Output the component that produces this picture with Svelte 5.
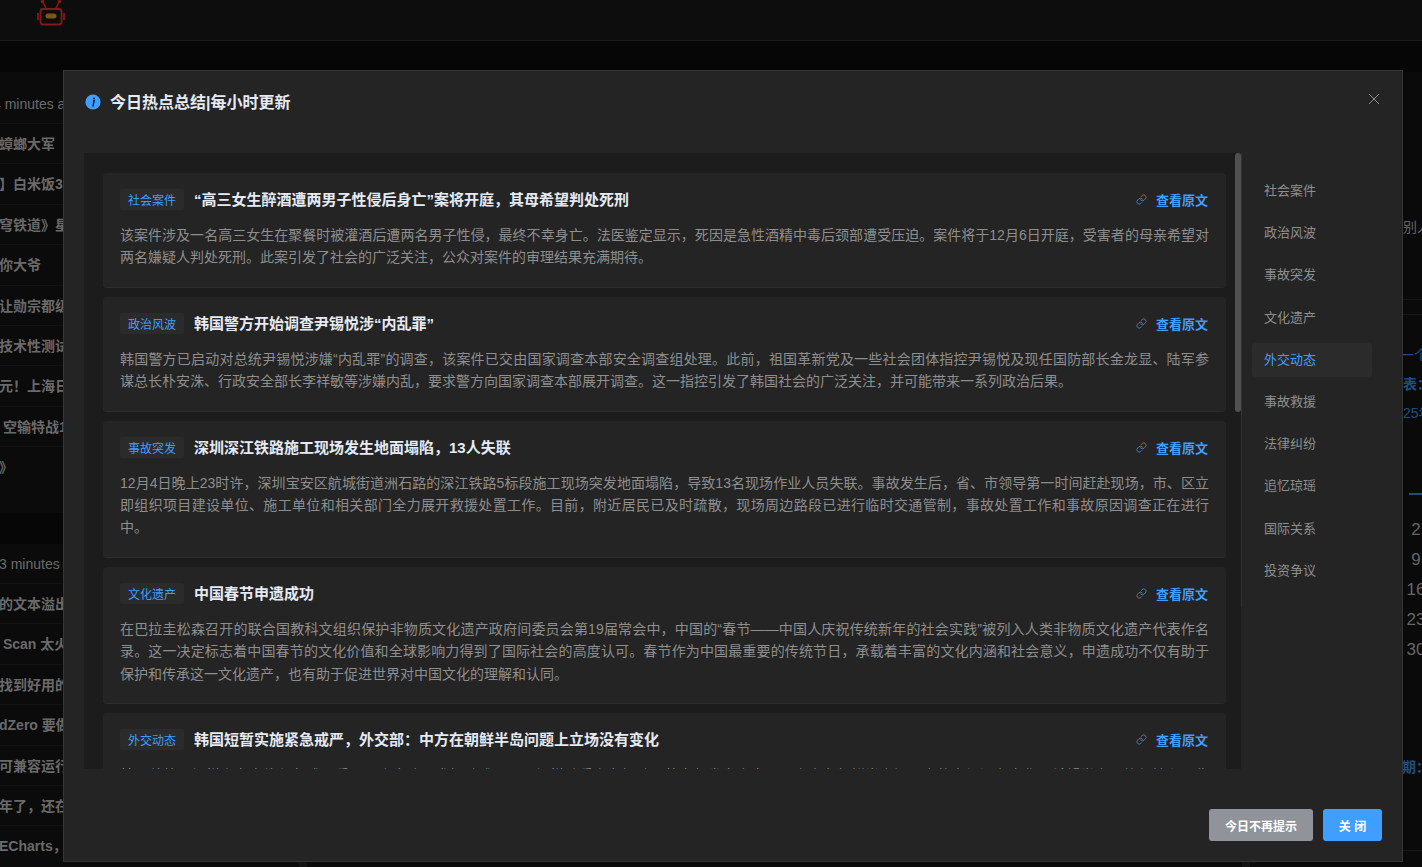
<script lang="ts">
  const leftTop = ['蟑螂大军', '】白米饭3', '穹铁道》星', '你大爷', '让勋宗都级', '技术性测试', '元！上海日', ' 空输特战1', '》'];
  const leftBottom = ['的文本溢出', ' Scan 太火', '找到好用的', 'dZero 要做', '可兼容运行', '年了，还在', 'ECharts，'];
  const dates = ['2', '9', '16', '23', '30'];

  const tabs = ['社会案件', '政治风波', '事故突发', '文化遗产', '外交动态', '事故救援', '法律纠纷', '追忆琼瑶', '国际关系', '投资争议'];
  const activeTab = '外交动态';

  // a \n marks a line break that has to land where the reference has it
  const news = [
    {
      tag: '社会案件',
      title: '“高三女生醉酒遭两男子性侵后身亡”案将开庭，其母希望判处死刑',
      body: '该案件涉及一名高三女生在聚餐时被灌酒后遭两名男子性侵，最终不幸身亡。法医鉴定显示，死因是急性酒精中毒后颈部遭受压迫。案件将于12月6日开庭，受害者的母亲希望对两名嫌疑人判处死刑。此案引发了社会的广泛关注，公众对案件的审理结果充满期待。'
    },
    {
      tag: '政治风波',
      title: '韩国警方开始调查尹锡悦涉“内乱罪”',
      body: '韩国警方已启动对总统尹锡悦涉嫌“内乱罪”的调查，该案件已交由国家调查本部安全调查组处理。此前，祖国革新党及一些社会团体指控尹锡悦及现任国防部长金龙显、陆军参\n谋总长朴安洙、行政安全部长李祥敏等涉嫌内乱，要求警方向国家调查本部展开调查。这一指控引发了韩国社会的广泛关注，并可能带来一系列政治后果。'
    },
    {
      tag: '事故突发',
      title: '深圳深江铁路施工现场发生地面塌陷，13人失联',
      body: '12月4日晚上23时许，深圳宝安区航城街道洲石路的深江铁路5标段施工现场突发地面塌陷，导致13名现场作业人员失联。事故发生后，省、市领导第一时间赶赴现场，市、区立即组织项目建设单位、施工单位和相关部门全力展开救援处置工作。目前，附近居民已及时疏散，现场周边路段已进行临时交通管制，事故处置工作和事故原因调查正在进行中。'
    },
    {
      tag: '文化遗产',
      title: '中国春节申遗成功',
      body: '在巴拉圭松森召开的联合国教科文组织保护非物质文化遗产政府间委员会第19届常会中，中国的“春节——中国人庆祝传统新年的社会实践”被列入人类非物质文化遗产代表作名录。这一决定标志着中国春节的文化价值和全球影响力得到了国际社会的高度认可。春节作为中国最重要的传统节日，承载着丰富的文化内涵和社会意义，申遗成功不仅有助于保护和传承这一文化遗产，也有助于促进世界对中国文化的理解和认同。'
    },
    {
      tag: '外交动态',
      title: '韩国短暂实施紧急戒严，外交部：中方在朝鲜半岛问题上立场没有变化',
      body: '韩国总统尹锡悦宣布实施紧急戒严后，国会表决要求解除戒严，尹锡悦随后宣布解除。外交部发言人表示，中方在朝鲜半岛问题上的立场没有变化，希望半岛局势保持和平稳定。'
    }
  ];
</script>

<div class="page">
  <header class="topbar">
    <svg class="robot" viewBox="0 0 28 26" width="28" height="26" aria-hidden="true">
      <path d="M9 8 6 2M19 8l3-6" fill="none" stroke="#861917" stroke-width="1.6" />
      <circle cx="5.5" cy="1.5" r="1.7" fill="#861917" />
      <circle cx="22.5" cy="1.5" r="1.7" fill="#861917" />
      <rect x="3.5" y="9" width="21" height="15.5" rx="2.5" fill="none" stroke="#861917" stroke-width="1.8" />
      <path d="M1 13v7M27 13v7" stroke="#861917" stroke-width="1.8" />
      <rect x="8.5" y="13.5" width="11" height="5" rx="2.5" fill="#7f5417" />
    </svg>
  </header>

  <div class="columns">
    <section class="col-left">
      <div class="panel panel-top">
        <div class="time time-first">4 minutes ago</div>
        {#each leftTop as row}
          <div class="row">{row}</div>
        {/each}
      </div>
      <div class="panel panel-bottom">
        <div class="time">3 minutes ago</div>
        {#each leftBottom as row}
          <div class="row">{row}</div>
        {/each}
      </div>
    </section>
    <div class="gutter"></div>
    <div class="col-mid"></div>
    <div class="gutter"></div>
    <section class="col-right">
      <div class="r-first">别人</div>
      <div class="r-rule"></div>
      <div class="r-link r-one">一个</div>
      <div class="r-label">表：</div>
      <div class="r-link">25年</div>
      <div class="r-line"></div>
      <div class="r-dates">
        {#each dates as d}
          <div>{d}</div>
        {/each}
      </div>
      <div class="r-label r-period">期：</div>
      <div class="r-foot"></div>
    </section>
  </div>
</div>

<div class="modal">
  <div class="modal-head">
    <svg class="info" viewBox="0 0 16 16" width="16" height="16" aria-hidden="true">
      <circle cx="8" cy="8" r="7.6" fill="#409eff" />
      <circle cx="9" cy="4.6" r="1.1" fill="#14253a" />
      <path d="M8 6.8h1.2l-1.2 5h1" fill="none" stroke="#14253a" stroke-width="1.5" />
    </svg>
    <span class="modal-title">今日热点总结|每小时更新</span>
    <svg class="close" viewBox="0 0 12 12" width="12" height="12" aria-hidden="true">
      <path d="M1 1l10 10M11 1 1 11" stroke="#8c8c8c" stroke-width="1" fill="none" />
    </svg>
  </div>

  <div class="modal-body">
    <div class="list">
      {#each news as item}
        <article class="card">
          <div class="card-head">
            <span class="tag">{item.tag}</span>
            <span class="card-title">{item.title}</span>
            <span class="source">
              <svg viewBox="0 0 24 24" width="11" height="11" aria-hidden="true">
                <path fill="none" stroke="#3a86d8" stroke-width="2" stroke-linecap="round" d="M10 13a5 5 0 0 0 7.54.54l3-3a5 5 0 0 0-7.07-7.07l-1.72 1.71M14 11a5 5 0 0 0-7.54-.54l-3 3a5 5 0 0 0 7.07 7.07l1.71-1.71" />
              </svg>
              <span>查看原文</span>
            </span>
          </div>
          <div class="card-body">
            {#each item.body.split('\n') as line}
              <p>{line}</p>
            {/each}
          </div>
        </article>
      {/each}
    </div>
    <div class="track"><div class="thumb"></div></div>
    <nav class="tabs">
      {#each tabs as tab}
        <div class="tab" class:active={tab === activeTab}>{tab}</div>
      {/each}
    </nav>
  </div>

  <div class="modal-foot">
    <button class="btn btn-muted">今日不再提示</button>
    <button class="btn btn-primary">关 闭</button>
  </div>
</div>

<style>
  :global(body) {
    background: #060606;
    font-family: 'Liberation Sans', 'Noto Sans CJK SC', sans-serif;
    overflow: hidden;
  }

  .page {
    height: 867px;
    display: flex;
    flex-direction: column;
    overflow: hidden;
  }

  .topbar {
    height: 40px;
    flex: none;
    background: #0d0d0d;
    border-bottom: 1px solid #1a1a1a;
    overflow: hidden;
    padding-left: 37px;
  }

  .robot {
    display: block;
  }

  .columns {
    flex: 1;
    display: grid;
    grid-template-columns: 299px 8px 1fr 8px 172px;
    padding-top: 31px;
    min-height: 0;
  }

  .col-left {
    display: flex;
    flex-direction: column;
    gap: 31px;
    overflow: hidden;
  }

  .panel {
    background: #0b0b0b;
    overflow: hidden;
    text-indent: -1px;
  }

  .panel-top {
    height: 441px;
    flex: none;
    box-sizing: border-box;
    padding-top: 12px;
  }

  .panel-bottom {
    flex: 1;
  }

  .time {
    height: 39px;
    line-height: 40px;
    font-size: 14px;
    color: #6c6c6c;
    white-space: nowrap;
  }

  .time-first {
    text-indent: -7px;
  }

  .row {
    height: 40.4px;
    line-height: 40px;
    font-size: 14px;
    font-weight: 700;
    color: #6a6a6a;
    white-space: pre;
    border-top: 1px solid #121212;
    box-sizing: border-box;
  }

  .gutter {
    background: #141414;
  }

  .col-mid {
    background: #0b0b0b;
  }

  .col-right {
    background: #0a0a0a;
    padding-left: 153px;
    overflow: hidden;
    font-size: 14px;
    white-space: nowrap;
  }

  .r-first {
    margin-top: 145px;
    height: 20px;
    line-height: 20px;
    color: #666;
  }

  .r-rule {
    height: 16px;
    margin: 62px -153px 0;
    border-top: 1px solid #161616;
    border-bottom: 1px solid #161616;
    box-sizing: border-box;
  }

  .r-link {
    margin-top: 28px;
    height: 24px;
    line-height: 24px;
    color: #1f4f80;
  }

  .r-one {
    margin-left: -3px;
  }

  .r-label {
    margin-top: 5px;
    height: 24px;
    line-height: 24px;
    color: #1f4f80;
    font-weight: 700;
  }

  .r-label + .r-link {
    margin-top: 5px;
  }

  .r-line {
    width: 14px;
    height: 2px;
    margin: 68px 0 0 6px;
    background: #1f4f80;
  }

  .r-dates {
    margin-top: 20px;
    width: 26px;
    text-align: center;
    font-size: 17px;
    line-height: 30px;
    color: #666;
  }

  .r-period {
    margin-top: 90px;
    margin-left: -1px;
  }

  .r-foot {
    margin: 71px -153px 0;
    border-top: 1px solid #161616;
  }

  .modal {
    position: fixed;
    left: 63px;
    top: 70px;
    width: 1340px;
    height: 792px;
    box-sizing: border-box;
    background: #242424;
    border: 1px solid #363636;
    display: flex;
    flex-direction: column;
  }

  .modal-head {
    height: 82px;
    flex: none;
    box-sizing: border-box;
    padding: 23px 21px 0 21px;
    display: flex;
    align-items: flex-start;
    gap: 9px;
  }

  .info {
    flex: none;
  }

  .modal-title {
    font-size: 16px;
    line-height: 18px;
    font-weight: 700;
    color: #e5eaf3;
    flex: 1;
  }

  .close {
    flex: none;
    margin: -1px 1px 0 0;
  }

  .modal-body {
    height: 616px;
    flex: none;
    padding: 0 20px;
    display: flex;
  }

  .list {
    flex: 1;
    min-width: 0;
    height: 616px;
    box-sizing: border-box;
    overflow: hidden;
    background: #1c1c1c;
    padding: 20px 9px 0 19px;
    display: flex;
    flex-direction: column;
    gap: 10px;
  }

  .card {
    flex: none;
    box-sizing: border-box;
    padding: 16px 17px 18px;
    background: #242424;
    border-radius: 4px;
    box-shadow: 0 1px 0 #2c2c2c;
  }

  .card-head {
    display: flex;
    align-items: center;
    height: 21px;
  }

  .tag {
    flex: none;
    height: 21px;
    line-height: 24px;
    padding: 0 8px;
    margin-right: 10px;
    font-size: 12px;
    color: #409eff;
    background: #2b2b2b;
    border-radius: 2px;
  }

  .card-title {
    flex: 1;
    min-width: 0;
    padding-bottom: 2px;
    font-size: 15px;
    font-weight: 700;
    color: #e5eaf3;
    white-space: nowrap;
  }

  .source {
    flex: none;
    display: flex;
    align-items: center;
    gap: 9px;
    margin-right: 1px;
    font-size: 13px;
    font-weight: 700;
    color: #409eff;
  }

  .card-body {
    margin-top: 14px;
    font-size: 14px;
    line-height: 22.4px;
    color: #8e8e8e;
  }

  .card-body p {
    margin: 0;
    text-align: justify;
  }

  .card-body p:not(:last-child) {
    text-align-last: justify;
  }

  .track {
    width: 6px;
    flex: none;
    background: #1c1c1c;
  }

  .thumb {
    height: 259px;
    background: #505050;
    border-radius: 3px;
  }

  .tabs {
    width: 141px;
    height: 454px;
    flex: none;
    box-sizing: border-box;
    border-left: 1px solid #333;
    padding: 21px 10px 0;
    display: flex;
    flex-direction: column;
    gap: 8.2px;
  }

  .tab {
    height: 34px;
    line-height: 34px;
    padding-left: 12px;
    font-size: 13px;
    color: #8e8e8e;
    border-radius: 4px;
  }

  .tab.active {
    color: #409eff;
    background: #2b2b2b;
  }

  .modal-foot {
    flex: 1;
    display: flex;
    justify-content: flex-end;
    align-items: flex-end;
    gap: 10px;
    padding: 0 20px 20px;
  }

  .btn {
    height: 32px;
    border: 0;
    border-radius: 3px;
    font-family: inherit;
    font-size: 12px;
    font-weight: 700;
    color: #fff;
  }

  .btn-muted {
    width: 104px;
    background: #909399;
  }

  .btn-primary {
    width: 59px;
    background: #409eff;
  }
</style>
